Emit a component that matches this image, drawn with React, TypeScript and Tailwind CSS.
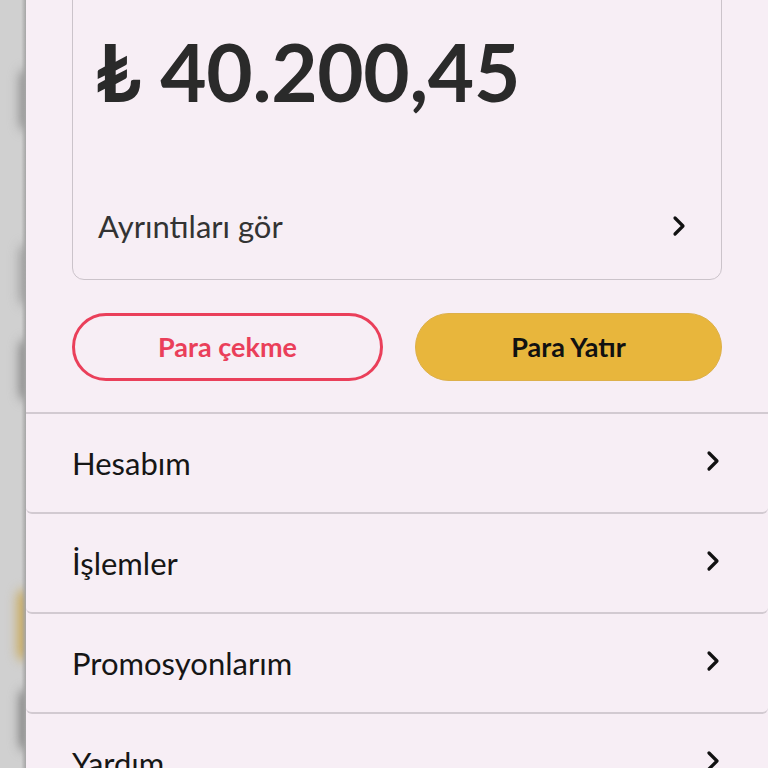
import React from 'react';

function Chevron({ className = '' }: { className?: string }) {
  return (
    <svg width="14" height="22" viewBox="0 0 14 22" className={className} fill="none">
      <path d="M3 3 L11 11 L3 19" stroke="#111" strokeWidth="3.2" strokeLinecap="round" strokeLinejoin="round" />
    </svg>
  );
}

const menuItems = ['Hesabım', 'İşlemler', 'Promosyonlarım', 'Yardım'];

export default function App() {
  return (
    <div className="flex w-[768px] h-[768px] overflow-hidden" style={{ fontFamily: 'Lato, "Noto Sans", sans-serif' }}>
      {/* blurred page behind the drawer */}
      <div className="relative w-[26px] shrink-0 bg-[#d0d0d0] overflow-hidden">
        <div className="absolute right-[-8px] top-[70px] w-[14px] h-[60px] rounded-full bg-[#8a8a8a] blur-[6px]" />
        <div className="absolute right-[-8px] top-[245px] w-[14px] h-[60px] rounded-full bg-[#9a9a9a] blur-[6px]" />
        <div className="absolute right-[-8px] top-[340px] w-[14px] h-[60px] rounded-full bg-[#7e7e7e] blur-[6px]" />
        <div className="absolute right-[-6px] top-[590px] w-[14px] h-[70px] rounded-full bg-[#c8a550] blur-[6px]" />
        <div className="absolute right-[-8px] top-[690px] w-[14px] h-[60px] rounded-full bg-[#777] blur-[6px]" />
        <div className="absolute right-0 top-0 bottom-0 w-[5px] bg-gradient-to-r from-transparent to-[#a5a5a5]" />
      </div>

      <div className="flex-1 bg-[#f7eef5] flex flex-col">
        <div className="px-[46px]">
          <div className="mt-[-20px] h-[300px] border border-[#cbc3ca] rounded-[12px] flex flex-col pl-[22px] pr-[24px]">
            <div className="mt-[50px] text-[80px] leading-[80px] font-bold text-[#2a2a2a] tracking-[-0.3px]">₺ 40.200,45</div>
            <div className="mt-auto mb-[34px] flex items-center justify-between pr-[11px] pl-[3px]">
              <span className="text-[31px] leading-[38px] text-[#333]">Ayrıntıları gör</span>
              <Chevron />
            </div>
          </div>

          <div className="mt-[33px] flex gap-[32px]">
            <button className="flex-1 h-[68px] rounded-full border-[3px] border-[#ea3f5a] text-[#ea3f5a] text-[27px] font-bold">
              Para çekme
            </button>
            <button className="flex-1 h-[68px] rounded-full bg-[#e8b63c] border border-[#ddb04a] text-[#111] text-[27px] font-bold">
              Para Yatır
            </button>
          </div>
        </div>

        <div className="mt-[31px] border-t-2 border-[#d2cad1]">
          {menuItems.map((item) => (
            <div
              key={item}
              className="h-[100px] flex items-center justify-between pl-[46px] pr-[48px] border-b-2 border-[#d2cad1] rounded-b-[6px]"
            >
              <span className="text-[31px] text-[#161616]">{item}</span>
              <Chevron className="-mt-[4px]" />
            </div>
          ))}
        </div>
      </div>
    </div>
  );
}
